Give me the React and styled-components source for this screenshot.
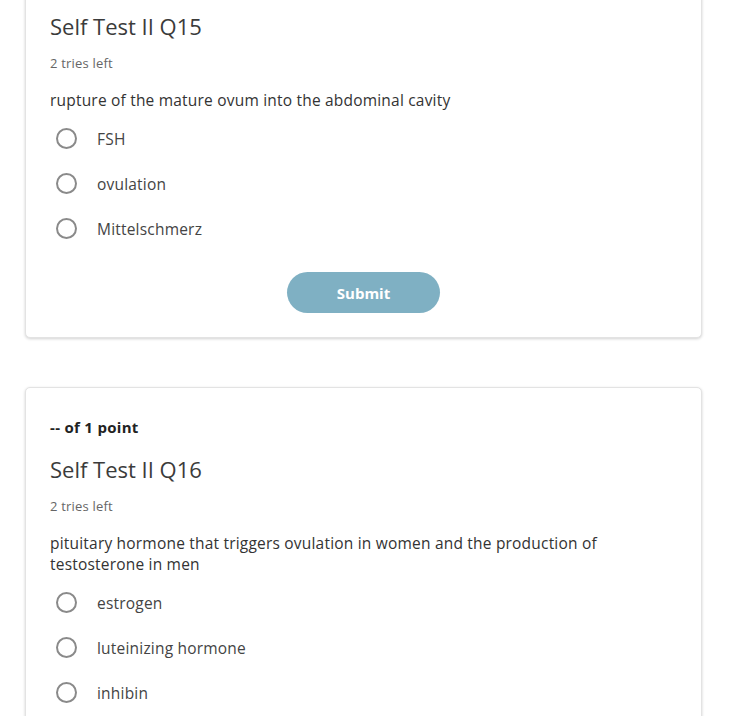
import React from 'react'
import styled, { createGlobalStyle } from 'styled-components'

const GlobalStyle = createGlobalStyle`
  html, body {
    margin: 0;
    padding: 0;
    background: #fff;
    overflow: hidden;
  }
  body {
    font-family: "Open Sans", "DejaVu Sans", sans-serif;
    color: #333;
  }
`

const Page = styled.div`
  display: flex;
  flex-direction: column;
  gap: 49px;
  padding: 0 51px 0 25px;
  margin-top: -56px;
`

const Card = styled.section`
  background: #fff;
  border: 1px solid #e3e3e3;
  border-radius: 5px;
  box-shadow: 0 1px 3px rgba(0, 0, 0, 0.18);
  padding: 29px 24px 24px;
  display: flex;
  flex-direction: column;
`

const Points = styled.div`
  font-size: 15px;
  font-weight: 700;
  line-height: 20px;
  letter-spacing: 0.3px;
  color: #222;
`

const Title = styled.h2`
  margin: 18px 0 0;
  font-size: 22px;
  font-weight: 400;
  line-height: 28px;
  color: #3b3b3b;
`

const Tries = styled.div`
  margin-top: 15px;
  font-size: 13px;
  line-height: 16px;
  letter-spacing: 0.2px;
  color: #666;
`

const Prompt = styled.p`
  margin: 19px 0 0;
  font-size: 15.5px;
  line-height: 21px;
  letter-spacing: 0.2px;
  color: #333;
`

const Options = styled.div`
  margin-top: 5px;
  display: flex;
  flex-direction: column;
`

const Option = styled.label`
  display: flex;
  align-items: center;
  height: 45px;
  padding-left: 6px;
  gap: 20px;
  font-size: 15.5px;
  letter-spacing: 0.2px;
  color: #444;
  cursor: pointer;
`

const Radio = styled.span`
  width: 17px;
  height: 17px;
  border: 2px solid #8a8a8a;
  border-radius: 50%;
  flex: none;
`

const Actions = styled.div`
  display: flex;
  justify-content: center;
  margin-top: 21px;
`

const SubmitButton = styled.button`
  width: 153px;
  height: 41px;
  border: none;
  border-radius: 21px;
  background: #7fb0c3;
  color: #fff;
  font-family: inherit;
  font-size: 15px;
  font-weight: 700;
`

const questions = [
  {
    title: 'Self Test II Q15',
    prompt: 'rupture of the mature ovum into the abdominal cavity',
    options: ['FSH', 'ovulation', 'Mittelschmerz'],
  },
  {
    title: 'Self Test II Q16',
    prompt:
      'pituitary hormone that triggers ovulation in women and the production of testosterone in men',
    options: ['estrogen', 'luteinizing hormone', 'inhibin'],
  },
]

export default function App() {
  return (
    <>
      <GlobalStyle />
      <Page>
        {questions.map(q => (
          <Card key={q.title}>
            <Points>-- of 1 point</Points>
            <Title>{q.title}</Title>
            <Tries>2 tries left</Tries>
            <Prompt>{q.prompt}</Prompt>
            <Options>
              {q.options.map(o => (
                <Option key={o}>
                  <Radio />
                  {o}
                </Option>
              ))}
            </Options>
            <Actions>
              <SubmitButton>Submit</SubmitButton>
            </Actions>
          </Card>
        ))}
      </Page>
    </>
  )
}
